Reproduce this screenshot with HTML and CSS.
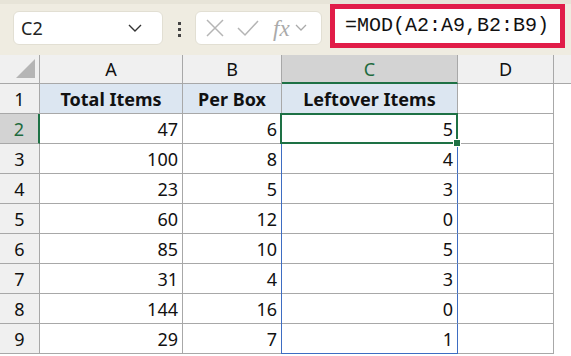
FILE: index.html
```html
<!DOCTYPE html>
<html lang="en">

<head>
    <meta charset="UTF-8">
    <title>MOD formula</title>
    <link rel="stylesheet" href="styles.css">
</head>

<body>
    <div class="toolbar">
        <div class="name-box">
            <span>C2</span>
            <svg class="chev" width="14" height="8" viewBox="0 0 14 8"><path d="M1 1 L7 7 L13 1" fill="none" stroke="#333" stroke-width="1.4"/></svg>
        </div>
        <div class="dots"><i></i><i></i><i></i></div>
        <div class="fx-box">
            <svg width="20" height="20" viewBox="0 0 20 20"><path d="M2 2 L18 18 M18 2 L2 18" stroke="#b5b5b5" stroke-width="1.5"/></svg>
            <svg width="22" height="18" viewBox="0 0 22 18"><path d="M1 9 L8 16 L21 2" fill="none" stroke="#b5b5b5" stroke-width="1.5"/></svg>
            <span class="fx">fx</span>
            <svg width="12" height="8" viewBox="0 0 12 8"><path d="M1 1 L6 6 L11 1" fill="none" stroke="#aaa" stroke-width="1.3"/></svg>
        </div>
        <div class="formula">=MOD(A2:A9,B2:B9)</div>
    </div>

    <div class="sheet">
        <div class="corner"><span class="tri"></span></div>
        <div class="col-head">A</div>
        <div class="col-head">B</div>
        <div class="col-head sel">C</div>
        <div class="col-head">D</div>
        <div class="col-head rest"></div>

        <div class="row-head">1</div>
        <div class="cell title">Total Items</div>
        <div class="cell title">Per Box</div>
        <div class="cell title">Leftover Items</div>
        <div class="cell"></div>
        <div class="cell rest"></div>

        <div class="row-head sel">2</div>
        <div class="cell num">47</div>
        <div class="cell num">6</div>
        <div class="cell num spill active">5</div>
        <div class="cell"></div>
        <div class="cell rest"></div>

        <div class="row-head">3</div>
        <div class="cell num">100</div>
        <div class="cell num">8</div>
        <div class="cell num spill">4</div>
        <div class="cell"></div>
        <div class="cell rest"></div>

        <div class="row-head">4</div>
        <div class="cell num">23</div>
        <div class="cell num">5</div>
        <div class="cell num spill">3</div>
        <div class="cell"></div>
        <div class="cell rest"></div>

        <div class="row-head">5</div>
        <div class="cell num">60</div>
        <div class="cell num">12</div>
        <div class="cell num spill">0</div>
        <div class="cell"></div>
        <div class="cell rest"></div>

        <div class="row-head">6</div>
        <div class="cell num">85</div>
        <div class="cell num">10</div>
        <div class="cell num spill">5</div>
        <div class="cell"></div>
        <div class="cell rest"></div>

        <div class="row-head">7</div>
        <div class="cell num">31</div>
        <div class="cell num">4</div>
        <div class="cell num spill">3</div>
        <div class="cell"></div>
        <div class="cell rest"></div>

        <div class="row-head">8</div>
        <div class="cell num">144</div>
        <div class="cell num">16</div>
        <div class="cell num spill">0</div>
        <div class="cell"></div>
        <div class="cell rest"></div>

        <div class="row-head">9</div>
        <div class="cell num">29</div>
        <div class="cell num">7</div>
        <div class="cell num spill last">1</div>
        <div class="cell"></div>
        <div class="cell rest"></div>
    </div>
</body>

</html>
```

FILE: styles.css
```css
* {
    margin: 0;
    padding: 0;
    box-sizing: border-box;
}

body {
    font-family: 'Noto Sans', 'Open Sans', sans-serif;
    background: #ffffff;
    width: 571px;
    height: 356px;
    overflow: hidden;
}

/* formula bar */

.toolbar {
    height: 55px;
    background: #efece1;
    border-top: 4px solid #e7e4d8;
    display: flex;
    align-items: flex-start;
    padding-left: 13px;
}

.name-box {
    margin-top: 7px;
    width: 150px;
    height: 34px;
    background: #fff;
    border: 1px solid #e2dfd3;
    border-radius: 6px;
    display: flex;
    align-items: center;
    justify-content: space-between;
    padding: 0 20px 0 7px;
    font-size: 18px;
    color: #222;
}

.dots {
    margin: 18px 0 0 15px;
    width: 3px;
    display: flex;
    flex-direction: column;
    gap: 3px;
}

.dots i {
    display: block;
    width: 3px;
    height: 3px;
    background: #444;
}

.fx-box {
    margin: 7px 0 0 14px;
    width: 127px;
    height: 34px;
    background: #fff;
    border: 1px solid #e2dfd3;
    border-radius: 6px;
    display: flex;
    align-items: center;
    padding-left: 9px;
    gap: 12px;
}

.fx {
    font-family: 'Liberation Serif', serif;
    font-style: italic;
    font-size: 23px;
    color: #aaa;
    margin-right: -7px;
    margin-left: 2px;
    line-height: 1;
}

.formula {
    margin: 0 0 0 8px;
    width: 235px;
    height: 44px;
    border: 5px solid #e11d48;
    background: #fff;
    font-family: 'Liberation Mono', monospace;
    font-size: 20px;
    line-height: 34px;
    padding-left: 10px;
    color: #111;
    white-space: nowrap;
}

/* grid */

.sheet {
    display: grid;
    grid-template-columns: 40px 143px 99px 176px 96px 1fr;
    grid-template-rows: 29px repeat(9, 30px);
}

.corner,
.col-head,
.row-head,
.cell {
    border-right: 1px solid #a8a8a8;
    border-bottom: 1px solid #a8a8a8;
}

.corner {
    background: #f0f0f0;
    position: relative;
}

.tri {
    position: absolute;
    right: 4px;
    bottom: 5px;
    width: 0;
    height: 0;
    border-left: 19px solid transparent;
    border-bottom: 19px solid #b5b5b5;
}

.col-head {
    background: #f0f0f0;
    text-align: center;
    font-size: 18px;
    line-height: 29px;
    color: #111;
}

.col-head.sel {
    background: #d3d3d3;
    color: #1e6b3e;
    border-bottom: 2px solid #1e7145;
}

.col-head.rest {
    border-right: none;
}

.row-head {
    background: #f0f0f0;
    text-align: center;
    font-size: 18px;
    line-height: 30px;
    color: #111;
}

.row-head.sel {
    background: #d3d3d3;
    color: #1e6b3e;
    border-right: 2px solid #1e7145;
}

.cell {
    background: #fff;
    font-size: 18px;
    line-height: 30px;
    color: #111;
}

.cell.rest {
    border: none;
}

.title {
    background: #dce6f1;
    font-weight: 700;
    text-align: center;
}

.num {
    text-align: right;
    padding-right: 4px;
}

.spill {
    border-right-color: #3e6dc2;
    box-shadow: -1px 0 0 #3e6dc2;
}

.spill.last {
    border-bottom-color: #3e6dc2;
}

.active {
    position: relative;
}

.active::after {
    content: "";
    position: absolute;
    left: -2px;
    top: -1px;
    right: -1px;
    bottom: -1px;
    border: 2px solid #1e7145;
}

.active::before {
    content: "";
    position: absolute;
    right: -4px;
    bottom: -4px;
    width: 6px;
    height: 6px;
    background: #1e7145;
    border: 1px solid #fff;
    z-index: 1;
}
```
